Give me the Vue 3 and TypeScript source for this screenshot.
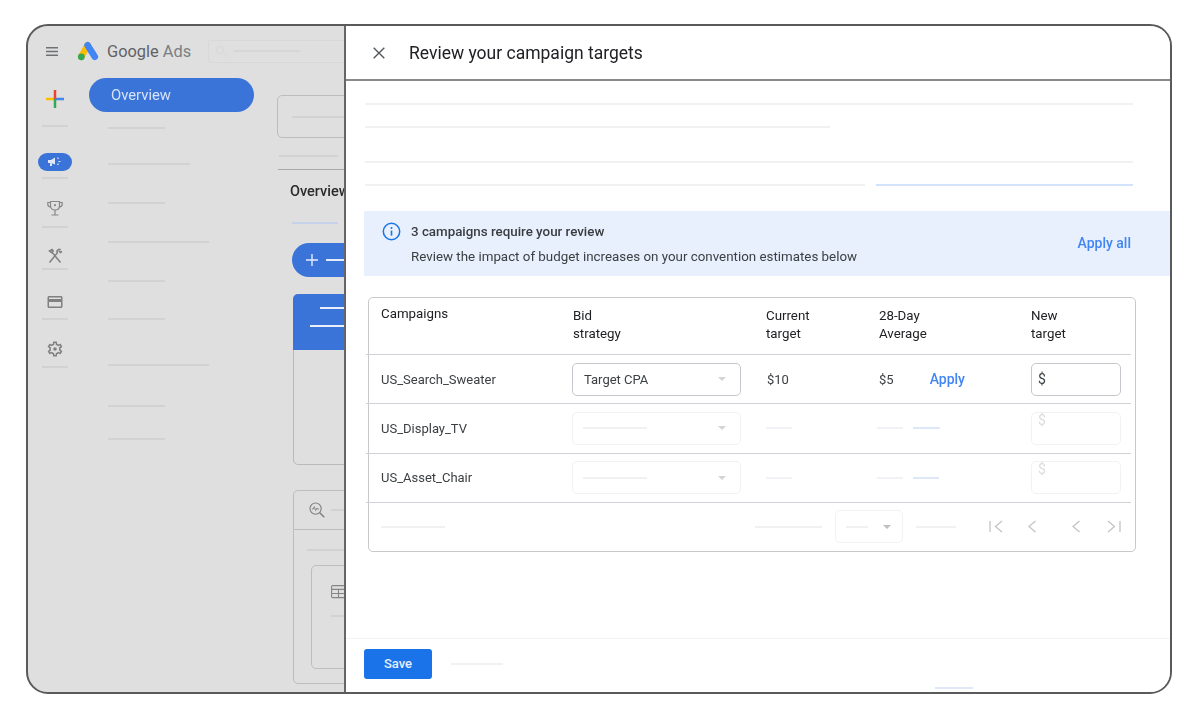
<script setup lang="ts">
interface Skeleton {
  width: number;
  top: number;
}

const navLines: Skeleton[] = [
  { width: 57, top: 15 },
  { width: 82, top: 34 },
  { width: 57, top: 37 },
  { width: 101, top: 37 },
  { width: 57, top: 37 },
  { width: 57, top: 36 },
  { width: 101, top: 44 },
  { width: 57, top: 39 },
  { width: 57, top: 31 },
];

const fadedRows = [
  { name: 'US_Display_TV', linkWidth: 27 },
  { name: 'US_Asset_Chair', linkWidth: 26 },
];
</script>

<template>
  <div class="page">
    <div class="window">
      <header class="topbar">
        <svg class="menu" width="12" height="9" viewBox="0 0 12 9">
          <path d="M0 .75h12M0 4.5h12M0 8.25h12" stroke="#6f7275" stroke-width="1.3" />
        </svg>
        <svg class="logo" width="22" height="20" viewBox="0 0 22 20">
          <path d="M4.300 15.800 10.600 4.200" stroke="#fbbc04" stroke-width="6.600" stroke-linecap="round" />
          <circle cx="4.300" cy="15.800" r="3.400" fill="#34a853" />
          <path d="M10.600 4.200 17.800 15.800" stroke="#4285f4" stroke-width="6.600" stroke-linecap="round" />
        </svg>
        <span class="brand">Google <span class="brand-light">Ads</span></span>
        <div class="search">
          <svg width="13" height="13" viewBox="0 0 13 13" fill="none" stroke="#d8d8d8" stroke-width="1">
            <circle cx="5" cy="5" r="3.600" />
            <path d="m8 8 3.500 3.500" />
          </svg>
          <i class="sk sk-left-faint search-line" />
        </div>
      </header>

      <div class="main">
        <aside class="rail">
          <svg class="rail-plus" width="18" height="18" viewBox="0 0 18 18">
            <path d="M0 9h9" stroke="#fbbc04" stroke-width="2.500" />
            <path d="M9 9h9" stroke="#4285f4" stroke-width="2.500" />
            <path d="M9 0v9" stroke="#ea4335" stroke-width="2.500" />
            <path d="M9 9v9" stroke="#34a853" stroke-width="2.500" />
          </svg>
          <i class="sk sk-left rail-line line-a" />

          <div class="rail-pill">
            <svg width="16" height="12" viewBox="0 0 16 12" fill="none">
              <path d="M1 4h3l4-2.500v7L4 7H1zM3 7v3h2V7.500" fill="#dfe8f8" />
              <path d="M10.500 1.500 11.500 3M11.500 5.500h2M10.500 9l1 -1.500" stroke="#dfe8f8" stroke-width="1.200" />
            </svg>
          </div>
          <i class="sk sk-left rail-line line-b" />

          <svg class="rail-icon trophy" width="18" height="18" viewBox="0 0 18 18" fill="none" stroke="#888" stroke-width="1.200">
            <path d="M4.500 2.500h9v4.200c0 2.600-2 4.300-4.500 4.300S4.500 9.300 4.500 6.700z" />
            <path d="M4.500 3.500H1.800v1.800c0 1.600 1.200 2.700 2.900 2.800M13.500 3.500h2.700v1.800c0 1.600-1.200 2.700-2.900 2.800M9 11v4.500M5.500 16h7" />
            <circle cx="9" cy="6.200" r="1.100" fill="#888" stroke="none" />
          </svg>
          <i class="sk sk-left rail-line line-c" />

          <svg class="rail-icon tools" width="18" height="18" viewBox="0 0 18 18" fill="none" stroke="#808080" stroke-width="1.500">
            <path d="M3.500 4 6 2.500 7.200 4 5.400 5.600zM5.800 5 14.500 15.500" />
            <path d="M14.800 2.600 12.400 2.500 10.800 4.200l.5 1.700L3.500 15.500" />
            <path d="M12.800 3.800l1.500 1.700 1.700-1" />
          </svg>
          <i class="sk sk-left rail-line line-d" />

          <svg class="rail-icon card" width="18" height="18" viewBox="0 0 24 24" fill="#808080">
            <path d="M20 4H4c-1.110 0-1.990.890-1.990 2L2 18c0 1.110.890 2 2 2h16c1.110 0 2-.890 2-2V6c0-1.110-.890-2-2-2zm0 14H4v-6h16v6zm0-10H4V6h16v2z" />
          </svg>
          <i class="sk sk-left rail-line line-e" />

          <svg class="rail-icon gear" width="18" height="18" viewBox="0 0 24 24" fill="#808080">
            <path d="M19.430 12.980c.040-.320.070-.640.070-.980 0-.340-.030-.660-.070-.980l2.110-1.650c.190-.150.240-.420.120-.640l-2-3.460c-.090-.160-.260-.250-.440-.250-.060 0-.120.010-.170.030l-2.490 1c-.520-.400-1.080-.730-1.690-.980l-.380-2.650C14.460 2.180 14.250 2 14 2h-4c-.250 0-.460.180-.490.420l-.380 2.650c-.610.250-1.170.590-1.690.980l-2.490-1c-.060-.020-.120-.030-.180-.030-.170 0-.340.090-.430.250l-2 3.460c-.130.220-.070.490.120.640l2.110 1.650c-.040.320-.070.650-.070.980 0 .330.030.660.070.980l-2.110 1.650c-.190.150-.240.420-.120.640l2 3.460c.090.160.260.250.440.250.060 0 .120-.010.170-.030l2.490-1c.520.400 1.080.730 1.690.980l.380 2.650c.030.240.240.420.490.420h4c.250 0 .460-.180.490-.420l.380-2.650c.610-.250 1.170-.590 1.690-.980l2.490 1c.060.020.120.030.180.030.170 0 .340-.090.430-.250l2-3.460c.120-.220.070-.490-.120-.640l-2.110-1.650zm-1.980-1.710c.040.310.050.520.050.730 0 .210-.020.430-.050.730l-.140 1.130.890.700 1.080.840-.700 1.210-1.270-.510-1.040-.420-.900.680c-.430.320-.840.560-1.250.730l-1.060.430-.160 1.130-.200 1.350h-1.400l-.190-1.350-.160-1.130-1.060-.430c-.430-.180-.830-.410-1.230-.710l-.910-.700-1.060.430-1.270.510-.700-1.210 1.080-.840.890-.700-.140-1.130c-.030-.310-.050-.540-.050-.740s.020-.430.050-.730l.14-1.130-.890-.700-1.080-.840.700-1.210 1.270.510 1.040.420.900-.680c.430-.320.840-.560 1.250-.730l1.060-.430.160-1.130.200-1.350h1.390l.190 1.350.160 1.130 1.060.430c.430.180.830.410 1.230.710l.910.700 1.060-.430 1.270-.510.700 1.210-1.070.850-.890.700.140 1.130z" />
            <circle cx="12" cy="12" r="2.400" />
          </svg>
          <i class="sk sk-left rail-line line-f" />
        </aside>

        <nav class="nav">
          <div class="nav-pill">Overview</div>
          <i
            v-for="(line, i) in navLines"
            :key="i"
            class="sk sk-left"
            :style="{ width: line.width + 'px', marginTop: line.top + 'px' }"
          />
        </nav>

        <section class="content">
          <div class="date-box"><i class="sk sk-left" /></div>
          <i class="sk sk-left content-line" />
          <div class="content-divider" />
          <div class="tab">Overview</div>
          <i class="sk tab-line" />
          <div class="new-btn">
            <svg width="14" height="14" viewBox="0 0 14 14">
              <path d="M7 1v12M1 7h12" stroke="#e4ecfa" stroke-width="1.400" />
            </svg>
            <i class="new-dash" />
          </div>
          <div class="score-card">
            <div class="score-head">
              <i class="score-dash first" />
              <i class="score-dash second" />
            </div>
          </div>
          <div class="insight-card">
            <div class="insight-head">
              <svg width="16" height="16" viewBox="0 0 16 16" fill="none" stroke="#808080" stroke-width="1.100">
                <circle cx="6.600" cy="6.600" r="5.600" />
                <path d="m10.800 10.800 4.400 4.400" stroke-width="1.500" />
                <path d="M3 7h1.300l1-2.400 1.400 4 1.200-2.600.700 1H10" stroke-width=".900" />
              </svg>
              <i class="sk sk-left head-line" />
            </div>
            <i class="sk sk-left insight-line" />
            <div class="inner-card">
              <svg width="15" height="15" viewBox="0 0 15 15" fill="none" stroke="#858585" stroke-width="1.100">
                <rect x=".600" y="1.600" width="13.800" height="12" rx="1" />
                <path d="M.600 5.400h13.800M.600 9.500h13.800M7.500 5.400v8.200" />
              </svg>
              <i class="sk sk-left inner-line" />
            </div>
          </div>
        </section>
      </div>

      <aside class="drawer">
        <header class="drawer-head">
          <svg class="close" width="12" height="12" viewBox="0 0 12 12">
            <path d="m.700.700 10.600 10.600M11.300.700.700 11.300" stroke="#55585b" stroke-width="1.400" />
          </svg>
          <h1 class="title">Review your campaign targets</h1>
        </header>

        <div class="drawer-body">
          <div class="intro">
            <i class="sk full" />
            <i class="sk short" />
            <i class="sk full third" />
            <div class="split">
              <i class="sk split-grey" />
              <i class="sk split-blue" />
            </div>
          </div>

          <div class="banner">
            <svg class="info" width="19" height="19" viewBox="0 0 19 19" fill="none">
              <circle cx="9.500" cy="9.500" r="8.200" stroke="#1a73e8" stroke-width="1.500" />
              <path d="M9.500 8.600v5" stroke="#1a73e8" stroke-width="1.600" />
              <circle cx="9.500" cy="5.900" r="1" fill="#1a73e8" />
            </svg>
            <div class="banner-text">
              <div class="banner-title">3 campaigns require your review</div>
              <div class="banner-sub">Review the impact of budget increases on your convention estimates below</div>
            </div>
            <a class="apply-all">Apply all</a>
          </div>

          <div class="table">
            <div class="row head">
              <div class="cell-raised">Campaigns</div>
              <div>Bid<br />strategy</div>
              <div>Current<br />target</div>
              <div>28-Day<br />Average</div>
              <div>New<br />target</div>
            </div>

            <div class="row">
              <div>US_Search_Sweater</div>
              <div class="select">
                <span>Target CPA</span>
                <i class="caret" />
              </div>
              <div class="value">$10</div>
              <div class="avg">
                <span>$5</span>
                <a class="apply">Apply</a>
              </div>
              <div class="input"><span>$</span></div>
            </div>

            <div v-for="row in fadedRows" :key="row.name" class="row">
              <div>{{ row.name }}</div>
              <div class="select faded">
                <i class="sk select-line" />
                <i class="caret" />
              </div>
              <div><i class="sk cell-line" /></div>
              <div class="avg-faded">
                <i class="sk cell-line" />
                <i class="sk link-line" :style="{ width: row.linkWidth + 'px' }" />
              </div>
              <div class="input faded"><span>$</span></div>
            </div>

            <div class="table-foot">
              <i class="sk foot-first" />
              <i class="sk foot-range" />
              <div class="select faded page-size">
                <i class="sk page-size-line" />
                <i class="caret dark" />
              </div>
              <i class="sk foot-count" />
              <div class="pager">
                <svg width="14" height="13" viewBox="0 0 14 13" fill="none" stroke="#c4c4c4" stroke-width="1.300">
                  <path d="M1 1v11M13 1 6.500 6.500 13 12" />
                </svg>
                <svg width="8" height="13" viewBox="0 0 8 13" fill="none" stroke="#c4c4c4" stroke-width="1.300">
                  <path d="M7.500 1 1 6.500 7.500 12" />
                </svg>
                <svg width="8" height="13" viewBox="0 0 8 13" fill="none" stroke="#c4c4c4" stroke-width="1.300">
                  <path d="M7.500 1 1 6.500 7.500 12" />
                </svg>
                <svg width="14" height="13" viewBox="0 0 14 13" fill="none" stroke="#c4c4c4" stroke-width="1.300">
                  <path d="M13 1v11M1 1l6.500 5.500L1 12" />
                </svg>
              </div>
            </div>
          </div>
        </div>

        <footer class="drawer-foot">
          <button class="save" type="button">Save</button>
          <i class="sk save-line" />
          <i class="sk foot-blue" />
        </footer>
      </aside>
    </div>
  </div>
</template>

<style scoped>
.page {
  width: 1200px;
  height: 719px;
  box-sizing: border-box;
  padding: 24px 28px 25px 26px;
  background: #fff;
  font-family: Roboto, "Liberation Sans", sans-serif;
  overflow: hidden;
}
.window {
  position: relative;
  height: 100%;
  box-sizing: border-box;
  display: flex;
  flex-direction: column;
  border: 2px solid #5a5a5a;
  border-radius: 22px;
  background: #dfdfdf;
  overflow: hidden;
  filter: blur(0.45px);
}
.sk {
  display: block;
  height: 2px;
  background: #f1f1f1;
  flex-shrink: 0;
}
.sk-left {
  background: #d2d2d2;
}
.sk-left-faint {
  background: #d6d6d6;
}

/* page behind the drawer */
.topbar {
  height: 44px;
  display: flex;
  align-items: center;
  flex-shrink: 0;
  padding-top: 6px;
  box-sizing: border-box;
}
.menu {
  margin-left: 18px;
}
.logo {
  margin-left: 19px;
}
.brand {
  margin-left: 8px;
  font-size: 16.4px;
  color: #5f6368;
  white-space: nowrap;
}
.brand-light {
  color: #7b7e82;
}
.search {
  margin-left: 17px;
  width: 200px;
  height: 23px;
  flex-shrink: 0;
  display: flex;
  align-items: center;
  gap: 6px;
  padding-left: 6px;
  box-sizing: border-box;
  border: 1px solid #d8d8d8;
  border-radius: 2px;
}
.search-line {
  width: 66px;
}
.main {
  flex: 1;
  display: flex;
  min-height: 0;
}
.rail {
  width: 54px;
  margin-right: 7px;
  display: flex;
  flex-direction: column;
  align-items: center;
  flex-shrink: 0;
}
.rail-line {
  width: 26px;
}
.rail-plus {
  margin-top: 20px;
}
.line-a {
  margin-top: 17px;
}
.rail-pill {
  margin-top: 26px;
  width: 34px;
  height: 18px;
  border-radius: 9px;
  background: #3b74d8;
  display: flex;
  align-items: center;
  justify-content: center;
}
.line-b {
  margin-top: 6px;
}
.trophy {
  margin-top: 20px;
}
.line-c {
  margin-top: 9px;
}
.tools {
  margin-top: 19px;
}
.line-d {
  margin-top: 3px;
}
.card {
  margin-top: 23px;
}
.line-e {
  margin-top: 7px;
}
.gear {
  margin-top: 20px;
}
.line-f {
  margin-top: 8px;
}
.nav {
  width: 188px;
  display: flex;
  flex-direction: column;
  flex-shrink: 0;
  padding: 8px 0 0 19px;
  box-sizing: border-box;
}
.nav-pill {
  width: 165px;
  height: 34px;
  margin-left: -19px;
  padding-left: 22px;
  box-sizing: border-box;
  border-radius: 17px;
  background: #3b74d8;
  color: #d6e3f8;
  font-size: 14.8px;
  line-height: 35px;
}
.content {
  flex: 1;
  display: flex;
  flex-direction: column;
  min-width: 0;
}
.date-box {
  margin-top: 25px;
  width: 200px;
  height: 43px;
  display: flex;
  align-items: center;
  padding-left: 14px;
  box-sizing: border-box;
  border: 1px solid #bdbdbd;
  border-radius: 5px;
}
.date-box .sk {
  width: 100px;
}
.content-line {
  width: 59px;
  margin: 17px 0 0 2px;
}
.content-divider {
  height: 1px;
  margin: 12px 0 0 1px;
  background: #a8a8a8;
}
.tab {
  margin: 14px 0 0 13px;
  font-size: 14.5px;
  line-height: 16px;
  font-weight: 500;
  color: #2b2b2b;
  white-space: nowrap;
}
.tab-line {
  width: 46px;
  margin: 22px 0 0 15px;
  background: #c5d2ea;
}
.new-btn {
  margin: 19px 0 0 15px;
  width: 120px;
  height: 34px;
  display: flex;
  align-items: center;
  gap: 7px;
  padding-left: 13px;
  box-sizing: border-box;
  border-radius: 17px;
  background: #3b74d8;
}
.new-dash {
  width: 40px;
  height: 2px;
  background: #e4ecfa;
}
.score-card {
  margin: 17px 0 0 16px;
  width: 200px;
  height: 171px;
  box-sizing: border-box;
  border: 1px solid #b9b9b9;
  border-radius: 5px;
  flex-shrink: 0;
}
.score-head {
  height: 56px;
  margin: -1px;
  background: #3b74d8;
  border-radius: 5px 5px 0 0;
  display: flex;
  flex-direction: column;
}
.score-dash {
  display: block;
  height: 2px;
  background: #e9effb;
}
.score-dash.first {
  margin: 13px 0 0 27px;
}
.score-dash.second {
  margin: 16px 0 0 17px;
}
.insight-card {
  margin: 25px 0 0 16px;
  width: 200px;
  height: 194px;
  box-sizing: border-box;
  border: 1px solid #bdbdbd;
  border-radius: 5px;
  flex-shrink: 0;
}
.insight-head {
  height: 38px;
  display: flex;
  align-items: center;
  gap: 6px;
  padding-left: 15px;
  border-bottom: 1px solid #bdbdbd;
}
.head-line {
  width: 60px;
}
.insight-line {
  width: 100px;
  margin: 19px 0 0 13px;
}
.inner-card {
  margin: 14px 0 0 17px;
  height: 104px;
  box-sizing: border-box;
  border: 1px solid #bdbdbd;
  border-radius: 5px;
  padding: 18px 0 0 19px;
}
.inner-line {
  width: 60px;
  margin-top: 12px;
}

/* drawer */
.drawer {
  position: absolute;
  top: 0;
  bottom: 0;
  left: 316px;
  right: 0;
  box-sizing: border-box;
  display: flex;
  flex-direction: column;
  background: #fff;
  border-left: 2px solid #666;
}
.drawer-head {
  height: 55px;
  box-sizing: border-box;
  flex-shrink: 0;
  display: flex;
  align-items: center;
  border-bottom: 2px solid #8a8a8a;
}
.close {
  margin-left: 27px;
}
.title {
  margin: 0 0 0 24px;
  font-size: 17.5px;
  line-height: 24px;
  font-weight: 400;
  color: #202124;
}
.drawer-body {
  flex: 1;
  min-height: 0;
  display: flex;
  flex-direction: column;
}
.intro {
  padding: 22px 0 0 19px;
}
.intro .full {
  width: 768px;
}
.intro .short {
  width: 465px;
  margin-top: 21px;
}
.intro .third {
  margin-top: 33px;
}
.split {
  margin-top: 21px;
  display: flex;
  gap: 11px;
}
.split-grey {
  width: 500px;
}
.split-blue {
  width: 257px;
  background: #d3e3fc;
}
.banner {
  margin: 25px 0 0 18px;
  height: 65px;
  flex-shrink: 0;
  display: flex;
  align-items: center;
  padding: 0 39px 0 18px;
  background: #e8f0fd;
}
.info {
  align-self: flex-start;
  margin-top: 11px;
  flex-shrink: 0;
}
.banner-text {
  flex: 1;
  margin-left: 10px;
  font-size: 13.35px;
  line-height: 25px;
  color: #3c4043;
}
.banner-title {
  font-weight: 500;
  color: #3a3d40;
}
.apply-all,
.apply {
  font-size: 14px;
  font-weight: 500;
  color: #4285f4;
}
.apply-all {
  margin-top: -2px;
}
.table {
  margin: 21px 0 0 22px;
  width: 768px;
  height: 255px;
  box-sizing: border-box;
  flex-shrink: 0;
  border: 1px solid #c8c8c8;
  border-radius: 5px;
  font-size: 13px;
  color: #3c4043;
}
.row {
  display: grid;
  grid-template-columns: 192px 193px 113px 152px 100px;
  align-items: center;
  width: 765px;
  height: 49.33px;
  box-sizing: border-box;
  margin-left: -3px;
  padding-left: 15px;
  border-bottom: 1px solid #cfd2d6;
}
.row.head {
  height: 57px;
  align-items: start;
  padding-top: 9px;
  font-size: 13.3px;
  line-height: 18px;
  color: #202124;
}
.cell-raised {
  margin-top: -2px;
}
.select {
  width: 169px;
  height: 33px;
  box-sizing: border-box;
  display: flex;
  align-items: center;
  justify-content: space-between;
  padding: 0 14px 0 11px;
  border: 1px solid #c4c7cb;
  border-radius: 5px;
  margin-left: -1px;
}
.select.faded {
  border-color: #f2f2f2;
}
.caret {
  width: 0;
  height: 0;
  border-left: 4px solid transparent;
  border-right: 4px solid transparent;
  border-top: 4px solid #d4d4d4;
}
.caret.dark {
  border-top-color: #c0c0c0;
}
.select-line {
  width: 64px;
  margin-left: -1px;
}
.value {
  margin-left: 1px;
}
.avg {
  display: flex;
  gap: 36px;
}
.apply {
  display: block;
  margin-top: -1px;
}
.input {
  width: 90px;
  height: 33px;
  box-sizing: border-box;
  padding-left: 6px;
  line-height: 31px;
  font-size: 14px;
  border: 1px solid #c4c7cb;
  border-radius: 5px;
}
.input.faded {
  border-color: #f2f2f2;
  color: #dcdcdc;
  line-height: 14px;
}
.cell-line {
  width: 26px;
  background: #f0f2f5;
}
.avg-faded {
  display: flex;
  gap: 10px;
  margin-left: -2px;
}
.link-line {
  background: #dfe8f8;
}
.table-foot {
  height: 48px;
  display: flex;
  align-items: center;
  padding-left: 12px;
}
.foot-first {
  width: 64px;
}
.foot-range {
  width: 67px;
  margin-left: 310px;
}
.page-size {
  width: 68px;
  margin-left: 13px;
  padding: 0 11px 0 10px;
}
.page-size-line {
  width: 22px;
}
.foot-count {
  width: 40px;
  margin-left: 13px;
}
.pager {
  margin-left: 33px;
  display: flex;
  align-items: center;
}
.pager svg:nth-child(2) {
  margin-left: 25px;
}
.pager svg:nth-child(3) {
  margin-left: 36px;
}
.pager svg:nth-child(4) {
  margin-left: 27px;
}
.drawer-foot {
  height: 54px;
  box-sizing: border-box;
  flex-shrink: 0;
  display: flex;
  align-items: flex-start;
  padding: 10px 0 0 18px;
  border-top: 1px solid #f3f3f3;
}
.save {
  width: 68px;
  height: 30px;
  border: 0;
  border-radius: 3px;
  background: #1a73e8;
  color: #e6effc;
  font: 500 13px/30px Roboto, "Liberation Sans", sans-serif;
  padding: 0;
}
.save-line {
  width: 52px;
  margin: 14px 0 0 19px;
}
.foot-blue {
  width: 38px;
  margin: 38px 0 0 432px;
  background: #dfe8f8;
}
</style>

<style>
html,
body {
  margin: 0;
  background: #fff;
}
</style>
